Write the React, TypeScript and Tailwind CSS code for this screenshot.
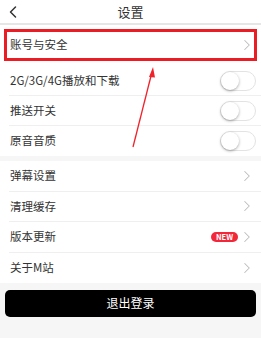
import { ChevronLeft, ChevronRight } from 'lucide-react';

const font = { fontFamily: '"Noto Sans CJK SC", "Noto Sans", sans-serif' };

function Toggle() {
    return (
        <div className="relative w-[36px] h-[20px] rounded-full bg-white border border-[#e3e3e3]">
            <div className="absolute left-[0px] top-[0px] w-[18px] h-[18px] rounded-full bg-white shadow-[0_1px_3px_rgba(0,0,0,0.35)]" />
        </div>
    );
}

function Arrow() {
    return <ChevronRight size={18} strokeWidth={1.4} className="text-[#bdbdbd]" />;
}

export default function App() {
    const toggleRows = ['2G/3G/4G播放和下载', '推送开关', '原音音质'];
    const linkRows = ['弹幕设置', '清理缓存', '版本更新', '关于M站'];

    return (
        <div className="relative w-[261px] h-[338px] bg-[#f6f6f6] overflow-hidden" style={font}>
            {/* Header */}
            <div className="h-[23px] bg-white grid grid-cols-[40px_1fr_40px] items-center">
                <ChevronLeft size={20} strokeWidth={1.8} className="text-[#333] ml-[3px]" />
                <div className="text-center text-[13px] text-[#333] leading-none">设置</div>
                <div />
            </div>
            <div className="h-[2px] bg-[#e6e6e6]" />

            {/* Account row */}
            <div className="h-[5px] bg-white" />
            <div className="relative h-[30px] bg-white flex items-center justify-between pl-[10px] pr-[5px]">
                <span className="text-[11.5px] text-[#333]">账号与安全</span>
                <Arrow />
                <div className="absolute left-[4px] right-[4px] top-[-1px] bottom-[-1px] border-[3px] border-[#ec1c24]" />
            </div>
            <div className="h-[6px] bg-white" />

            {/* Toggle rows */}
            <div className="bg-white">
                {toggleRows.map((label, i) => (
                    <div key={label} className="pl-[9px]">
                        <div
                            className={`h-[30px] flex items-center justify-between pr-[5px] ${
                                i < toggleRows.length - 1 ? 'border-b border-[#efefef]' : ''
                            }`}
                        >
                            <span className="text-[11.5px] text-[#333] pl-[1px]">{label}</span>
                            <Toggle />
                        </div>
                    </div>
                ))}
            </div>

            <div className="h-[5px]" />

            {/* Link rows */}
            <div className="bg-white">
                {linkRows.map((label, i) => (
                    <div key={label} className="pl-[9px]">
                        <div
                            className={`h-[30.5px] flex items-center justify-between pr-[5px] ${
                                i < linkRows.length - 1 ? 'border-b border-[#efefef]' : ''
                            }`}
                        >
                            <span className="text-[11.5px] text-[#333] pl-[1px]">{label}</span>
                            <div className="flex items-center gap-[0px]">
                                {label === '版本更新' && (
                                    <span className="h-[10px] w-[27px] text-center rounded-full bg-[#f2283a] text-white text-[7.5px] font-bold leading-[10px]">
                                        NEW
                                    </span>
                                )}
                                <Arrow />
                            </div>
                        </div>
                    </div>
                ))}
            </div>

            {/* Logout */}
            <div className="pt-[6px] px-[5px]">
                <button className="w-full h-[27px] rounded-[5px] bg-black text-white text-[12px]">退出登录</button>
            </div>

            {/* Annotation arrow */}
            <svg className="absolute left-0 top-0 pointer-events-none" width="261" height="338">
                <line x1="133" y1="147" x2="151.5" y2="74" stroke="#f0232b" strokeWidth="1.3" />
                <polygon points="153,67 149,77 155,77.5" fill="#f0232b" />
            </svg>
        </div>
    );
}
